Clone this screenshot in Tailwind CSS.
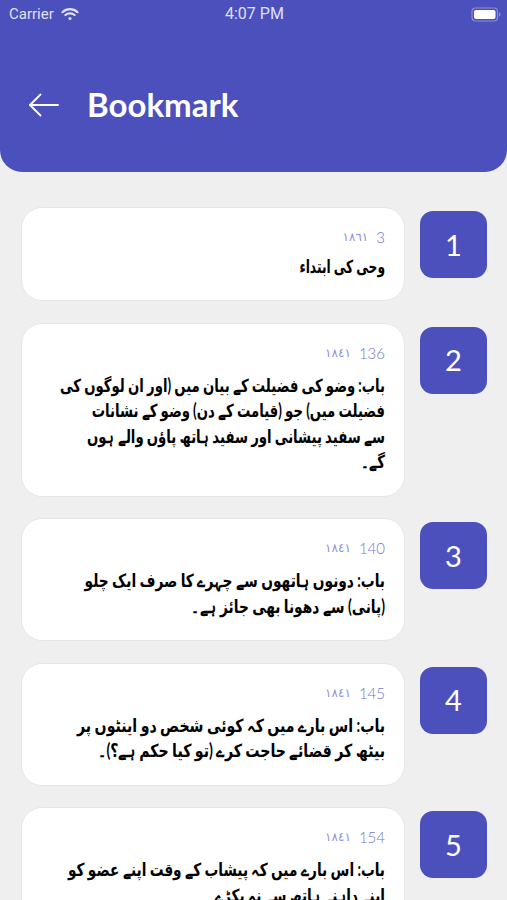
<!DOCTYPE html>
<html lang="ur">
  <head>
    <meta charset="UTF-8" />
    <meta name="viewport" content="width=device-width, initial-scale=1.0" />
    <title>Bookmark</title>
    <script src="https://cdn.jsdelivr.net/npm/@tailwindcss/browser@4"></script>
  </head>
  <body class="bg-[#efefef] h-[900px] overflow-hidden font-['Lato','DejaVu_Sans',sans-serif]">
    <!-- Header -->
    <header class="bg-[#4c50bd] h-[172px] rounded-b-[22px] text-white">
      <div class="h-[28px] flex items-center justify-between pl-[9px] pr-[6px] relative text-[#dfe0f5]">
        <div class="flex items-center gap-[7px] text-[15px] font-['Roboto',sans-serif]">
          <span>Carrier</span>
          <svg width="18" height="14" viewBox="0 0 18 14" fill="none" stroke="currentColor" stroke-width="2.200" stroke-linecap="round">
            <path d="M1.500 5.200C5.800 1.200 12.200 1.200 16.500 5.200" />
            <path d="M4.400 8C7 5.700 11 5.700 13.600 8" />
            <circle cx="9" cy="11.500" r="1.500" fill="currentColor" stroke="none" />
          </svg>
        </div>
        <span class="absolute left-[225px] text-[16px] font-['Roboto',sans-serif]">4:07 PM</span>
        <svg width="30" height="15" viewBox="0 0 30 15" fill="none">
          <rect x="1" y="1" width="25.500" height="13" rx="3.500" stroke="#8a8dd6" stroke-width="1.200" />
          <rect x="3" y="3" width="21.500" height="9" rx="2" fill="#fff" />
          <path d="M28 5.500c1 .4 1.500 1.100 1.500 2s-.5 1.600-1.500 2z" fill="#8a8dd6" />
        </svg>
      </div>
      <div class="flex items-center pl-[28px] mt-[60px] gap-[27px]">
        <svg width="32" height="24" viewBox="0 0 32 24" fill="none" stroke="#fff" stroke-width="1.800" stroke-linecap="round" stroke-linejoin="round">
          <path d="M30 12H2" />
          <path d="M12.500 1.500L2 12l10.500 10.500" />
        </svg>
        <h1 class="text-[33px] leading-none font-bold">Bookmark</h1>
      </div>
    </header>

    <!-- Bookmark list -->
    <main class="pl-[21px] pr-[20px] pt-[35px] flex flex-col gap-[21.500px]">
      <div class="flex items-start gap-[15px]">
        <div dir="rtl" class="w-[384px] shrink-0 bg-white rounded-[21px] border border-[#e6e6e6] pt-[19px] pb-[21px] pr-[19px] pl-[10px]">
          <p class="h-[20px] text-[15px] leading-[20px] text-[#7478cf] font-light flex items-center gap-[8px]"><span>3</span><span class="text-[12px] font-normal text-[#8d90da]">١٨٦١</span></p>
          <p class="mt-[7px] text-[18px] leading-[25px] font-bold text-black whitespace-nowrap origin-right scale-x-[0.68]">وحی کی ابتداء</p>
        </div>
        <div class="w-[67px] h-[67px] mt-[4px] bg-[#4c50bd] rounded-[13px] flex items-center justify-center text-white text-[29px]">1</div>
      </div>

      <div class="flex items-start gap-[15px]">
        <div dir="rtl" class="w-[384px] shrink-0 bg-white rounded-[21px] border border-[#e6e6e6] pt-[19px] pb-[21px] pr-[19px] pl-[10px]">
          <p class="h-[20px] text-[15px] leading-[20px] text-[#7478cf] font-light flex items-center gap-[8px]"><span>136</span><span class="text-[12px] font-normal text-[#8d90da]">١٨٤١</span></p>
          <p class="mt-[10px] text-[18px] leading-[25.500px] font-bold text-black whitespace-nowrap origin-right scale-x-[0.735]">باب: وضو کی فضیلت کے بیان میں (اور ان لوگوں کی<br />فضیلت میں) جو (قیامت کے دن) وضو کے نشانات<br />سے سفید پیشانی اور سفید ہاتھ پاؤں والے ہوں<br />گے۔</p>
        </div>
        <div class="w-[67px] h-[67px] mt-[4px] bg-[#4c50bd] rounded-[13px] flex items-center justify-center text-white text-[29px]">2</div>
      </div>

      <div class="flex items-start gap-[15px]">
        <div dir="rtl" class="w-[384px] shrink-0 bg-white rounded-[21px] border border-[#e6e6e6] pt-[19px] pb-[21px] pr-[19px] pl-[10px]">
          <p class="h-[20px] text-[15px] leading-[20px] text-[#7478cf] font-light flex items-center gap-[8px]"><span>140</span><span class="text-[12px] font-normal text-[#8d90da]">١٨٤١</span></p>
          <p class="mt-[10px] text-[18px] leading-[25.500px] font-bold text-black whitespace-nowrap origin-right scale-x-[0.765]">باب: دونوں ہاتھوں سے چہرے کا صرف ایک چلو<br />(پانی) سے دھونا بھی جائز ہے۔</p>
        </div>
        <div class="w-[67px] h-[67px] mt-[4px] bg-[#4c50bd] rounded-[13px] flex items-center justify-center text-white text-[29px]">3</div>
      </div>

      <div class="flex items-start gap-[15px]">
        <div dir="rtl" class="w-[384px] shrink-0 bg-white rounded-[21px] border border-[#e6e6e6] pt-[19px] pb-[21px] pr-[19px] pl-[10px]">
          <p class="h-[20px] text-[15px] leading-[20px] text-[#7478cf] font-light flex items-center gap-[8px]"><span>145</span><span class="text-[12px] font-normal text-[#8d90da]">١٨٤١</span></p>
          <p class="mt-[10px] text-[18px] leading-[25.500px] font-bold text-black whitespace-nowrap origin-right scale-x-[0.785]">باب: اس بارے میں کہ کوئی شخص دو اینٹوں پر<br />بیٹھ کر قضائے حاجت کرے (تو کیا حکم ہے؟)۔</p>
        </div>
        <div class="w-[67px] h-[67px] mt-[4px] bg-[#4c50bd] rounded-[13px] flex items-center justify-center text-white text-[29px]">4</div>
      </div>

      <div class="flex items-start gap-[15px]">
        <div dir="rtl" class="w-[384px] shrink-0 bg-white rounded-[21px] border border-[#e6e6e6] pt-[19px] pb-[21px] pr-[19px] pl-[10px]">
          <p class="h-[20px] text-[15px] leading-[20px] text-[#7478cf] font-light flex items-center gap-[8px]"><span>154</span><span class="text-[12px] font-normal text-[#8d90da]">١٨٤١</span></p>
          <p class="mt-[10px] text-[18px] leading-[25.500px] font-bold text-black whitespace-nowrap origin-right scale-x-[0.76]">باب: اس بارے میں کہ پیشاب کے وقت اپنے عضو کو<br />اپنے داہنے ہاتھ سے نہ پکڑے۔</p>
        </div>
        <div class="w-[67px] h-[67px] mt-[4px] bg-[#4c50bd] rounded-[13px] flex items-center justify-center text-white text-[29px]">5</div>
      </div>
    </main>
  </body>
</html>
